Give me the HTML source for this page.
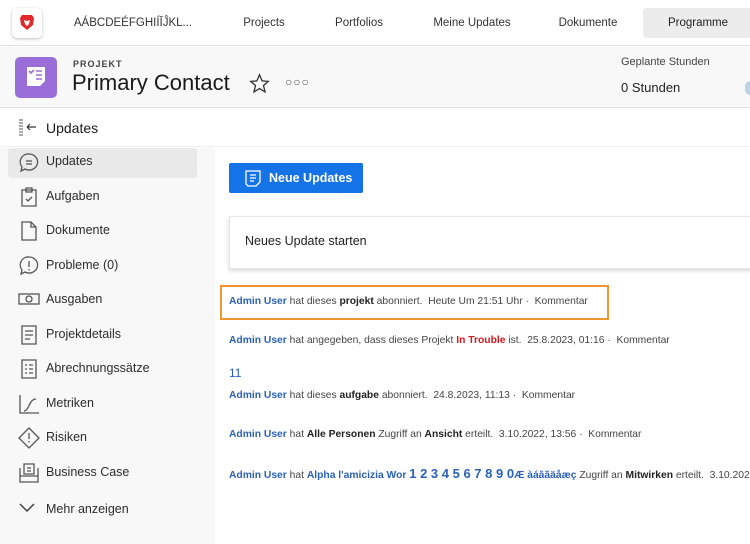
<!DOCTYPE html>
<html><head><meta charset="utf-8"><style>
*{margin:0;padding:0;box-sizing:border-box}
body{width:750px;height:544px;overflow:hidden;font-family:"Liberation Sans",sans-serif;color:#2c2c2c;background:#fff;position:relative}
.a{position:absolute;white-space:nowrap}
.nav{font-size:11.5px;color:#333;transform:translateX(-50%);top:17px}
.side{font-size:12.5px;color:#2c2c2c;left:46px}
.ic{position:absolute;left:18px}
.u{font-size:10.3px;color:#444;left:229px}
.u b{color:#222}
.u .n{color:#2b62b8;font-weight:bold}
</style></head><body>
<div class="a" style="left:0;top:0;width:750px;height:46px;background:#fff;border-bottom:1px solid #e1e1e1"></div>
<div class="a" style="left:12px;top:8px;width:30px;height:30px;background:#fff;border-radius:5px;box-shadow:0 1px 3px rgba(0,0,0,.25)"></div>
<svg class="a" style="left:19px;top:14px" width="16" height="17" viewBox="0 0 16 17"><path d="M3 1h10l2 3-1 7-6 5-6-5-1-7z" fill="#e3282c"/><path d="M5 6l3 1 3-1-1 4-2 2-2-2z" fill="#fff"/></svg>
<div class="a nav" style="left:133px">AÁBCDEÉFGHIÍĪĴKL...</div>
<div class="a nav" style="left:264px">Projects</div>
<div class="a nav" style="left:359px">Portfolios</div>
<div class="a nav" style="left:472px">Meine Updates</div>
<div class="a nav" style="left:588px">Dokumente</div>
<div class="a" style="left:643px;top:8px;width:110px;height:30px;background:#ececec;border-radius:4px"></div>
<div class="a nav" style="left:698px;color:#222">Programme</div>
<div class="a" style="left:0;top:47px;width:750px;height:61px;background:#f8f8f8;border-bottom:1px solid #e3e3e3"></div>
<div class="a" style="left:15px;top:57px;width:42px;height:41px;background:#9a6ed8;border-radius:5px"></div>
<svg class="a" style="left:25px;top:65px" width="22" height="24" viewBox="0 0 22 24"><path d="M2 2h18v14l-5 5H2z" fill="#fff"/><path d="M4 6l2 2 3-3M11 6h6M11 10h6M11 14h6" stroke="#9a6ed8" stroke-width="1.6" fill="none"/></svg>
<div class="a" style="left:73px;top:59px;font-size:9px;font-weight:bold;letter-spacing:1px;color:#444">PROJEKT</div>
<div class="a" style="left:72px;top:70px;font-size:22px;color:#1a1a1a">Primary Contact</div>
<svg class="a" style="left:249px;top:73px" width="21" height="21" viewBox="0 0 24 24"><path d="M12 2l3 7 7 .6-5.4 4.7 1.7 7.3L12 17.8 5.7 21.6l1.7-7.3L2 9.6 9 9z" fill="none" stroke="#333" stroke-width="1.5"/></svg>
<div class="a" style="left:285px;top:75px;font-size:12px;letter-spacing:1px;color:#555">○○○</div>
<div class="a" style="left:621px;top:56px;font-size:11px;color:#444">Geplante Stunden</div>
<div class="a" style="left:621px;top:80px;font-size:13px;color:#222">0 Stunden</div>
<div class="a" style="left:745px;top:81px;width:10px;height:14px;border-radius:7px;background:#bcd2ea"></div>
<div class="a" style="left:0;top:109px;width:750px;height:38px;background:#fff;border-bottom:1px solid #eee"></div>
<svg class="a" style="left:18px;top:118px" width="20" height="18" viewBox="0 0 20 18"><path d="M1 2h4M1 5h4M1 8h4M1 11h4M1 14h4M1 17h4" stroke="#555" stroke-width="1"/><path d="M9 9h9M9 9l3-3M9 9l3 3" stroke="#333" stroke-width="1.2" fill="none"/></svg>
<div class="a" style="left:46px;top:120px;font-size:14px;color:#1a1a1a">Updates</div>
<div class="a" style="left:0;top:148px;width:215px;height:396px;background:#f8f8f8"></div>
<div class="a" style="left:8px;top:148px;width:189px;height:30px;background:#e9e9e9;border-radius:3px"></div>
<svg class="ic" style="top:152px" width="22" height="22" viewBox="0 0 22 22" fill="none" stroke="#555" stroke-width="1.3"><path d="M11 2a8.5 8 0 1 1-4 15l-4 2 1-4A8 8 0 0 1 11 2zM8 9h6M8 12h6"/></svg>
<div class="a side" style="top:154px">Updates</div>
<svg class="ic" style="top:186px" width="22" height="22" viewBox="0 0 22 22" fill="none" stroke="#555" stroke-width="1.3"><path d="M4 4h14v16H4zM8 2h6v4H8zM8 13l2 2 4-4"/></svg>
<div class="a side" style="top:189px">Aufgaben</div>
<svg class="ic" style="top:220px" width="22" height="22" viewBox="0 0 22 22" fill="none" stroke="#555" stroke-width="1.3"><path d="M4 2h9l5 5v13H4zM13 2v5h5"/></svg>
<div class="a side" style="top:223px">Dokumente</div>
<svg class="ic" style="top:255px" width="22" height="22" viewBox="0 0 22 22" fill="none" stroke="#555" stroke-width="1.3"><path d="M11 2a8.5 8 0 1 1-4 15l-4 2 1-4A8 8 0 0 1 11 2zM11 6v6M11 14v1.5"/></svg>
<div class="a side" style="top:258px">Probleme (0)</div>
<svg class="ic" style="top:291px" width="22" height="16" viewBox="0 0 22 16" fill="none" stroke="#555" stroke-width="1.3"><rect x="1" y="3" width="20" height="10"/><circle cx="11" cy="8" r="3"/></svg>
<div class="a side" style="top:292px">Ausgaben</div>
<svg class="ic" style="top:324px" width="22" height="22" viewBox="0 0 22 22" fill="none" stroke="#555" stroke-width="1.3"><path d="M4 2h14v18H4zM7 7h8M7 11h8M7 15h5"/></svg>
<div class="a side" style="top:327px">Projektdetails</div>
<svg class="ic" style="top:358px" width="22" height="22" viewBox="0 0 22 22" fill="none" stroke="#555" stroke-width="1.3"><path d="M4 2h14v18H4zM7 7h2M11 7h4M7 11h2M11 11h4M7 15h2M11 15h4"/></svg>
<div class="a side" style="top:361px">Abrechnungssätze</div>
<svg class="ic" style="top:393px" width="22" height="22" viewBox="0 0 22 22" fill="none" stroke="#555" stroke-width="1.3"><path d="M2 2v18h19M6 18c5 0 5-12 12-12"/></svg>
<div class="a side" style="top:396px">Metriken</div>
<svg class="ic" style="top:427px" width="22" height="22" viewBox="0 0 22 22" fill="none" stroke="#555" stroke-width="1.3"><path d="M11 1l10 10-10 10L1 11zM11 6v6M11 14v1.5"/></svg>
<div class="a side" style="top:430px">Risiken</div>
<svg class="ic" style="top:462px" width="22" height="22" viewBox="0 0 22 22" fill="none" stroke="#555" stroke-width="1.3"><path d="M6 2h10v10H6zM9 6h4M9 9h4M2 6v14h18V6M2 14h18"/></svg>
<div class="a side" style="top:465px">Business Case</div>
<svg class="ic" style="top:502px" width="18" height="12" viewBox="0 0 18 12" fill="none" stroke="#444" stroke-width="1.5"><path d="M2 2l7 7 7-7"/></svg>
<div class="a side" style="top:502px">Mehr anzeigen</div>
<div class="a" style="left:229px;top:163px;width:134px;height:30px;background:#1473e6;border-radius:2px"></div>
<svg class="a" style="left:244px;top:169px" width="18" height="18" viewBox="0 0 18 18" fill="none" stroke="#fff" stroke-width="1.3"><path d="M2 2h14v11l-4 4H4l-2-2zM6 6h6M6 9h6M6 12h4"/></svg>
<div class="a" style="left:269px;top:171px;font-size:12.5px;color:#fff;font-weight:bold">Neue Updates</div>
<div class="a" style="left:229px;top:216px;width:530px;height:53px;background:#fff;border:1px solid #e6e6e6;box-shadow:0 2px 4px rgba(0,0,0,.15)"></div>
<div class="a" style="left:245px;top:234px;font-size:12.5px;color:#222">Neues Update starten</div>
<div class="a" style="left:220px;top:285px;width:389px;height:35px;border:2px solid #f0962e"></div>
<div class="a u" style="top:296px"><span class="n">Admin User</span> hat dieses <b>projekt</b> abonniert.&nbsp; Heute Um 21:51 Uhr · &nbsp;Kommentar</div>
<div class="a u" style="top:335px"><span class="n">Admin User</span> hat angegeben, dass dieses Projekt <b style="color:#d7161c">In Trouble</b> ist.&nbsp; 25.8.2023, 01:16 · &nbsp;Kommentar</div>
<div class="a u" style="top:366px;color:#2b62b8;font-size:12px">11</div>
<div class="a u" style="top:390px"><span class="n">Admin User</span> hat dieses <b>aufgabe</b> abonniert.&nbsp; 24.8.2023, 11:13 · &nbsp;Kommentar</div>
<div class="a u" style="top:429px"><span class="n">Admin User</span> hat <b>Alle Personen</b> Zugriff an <b>Ansicht</b> erteilt.&nbsp; 3.10.2022, 13:56 · &nbsp;Kommentar</div>
<div class="a u" style="top:466px"><span class="n">Admin User</span> hat <span class="n">Alpha l'amicizia Wor <span style="font-size:13px">1 2 3 4 5 6 7 8 9 0</span>Æ àáâãäåæç</span> Zugriff an <b>Mitwirken</b> erteilt.&nbsp; 3.10.2022</div>
</body></html>
